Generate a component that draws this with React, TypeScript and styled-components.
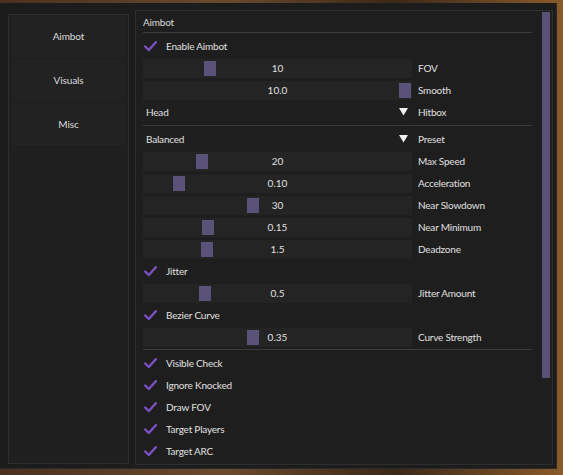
import React from "react";
import styled, { createGlobalStyle } from "styled-components";

const Global = createGlobalStyle`
  html, body { margin: 0; padding: 0; }
  body {
    width: 563px; height: 475px; overflow: hidden;
    background: linear-gradient(90deg, #4a3020 0%, #6b4a2c 40%, #3a2818 70%, #8a5a2a 100%);
    font-family: Lato, "Open Sans", sans-serif;
  }
`;

const Window = styled.div`
  margin-top: 3px;
  width: 557px;
  height: 466px;
  background: #1c1c1c;
  border-right: 1px solid #2a2a2a;
  border-bottom: 1px solid #2a2a2a;
  display: flex;
  align-items: flex-start;
  box-sizing: border-box;
  padding-left: 8px;
  padding-top: 7px;
`;

const Sidebar = styled.div`
  margin-top: 4px;
  width: 121px;
  height: 450px;
  box-sizing: border-box;
  border: 1px solid #2e2e2e;
  background: #1f1f1f;
  display: flex;
  flex-direction: column;
  padding: 0 3px;
`;

const NavButton = styled.div`
  height: 44px;
  display: flex;
  align-items: center;
  justify-content: center;
  color: #dcdcdc;
  font-size: 10px;
  letter-spacing: -0.1px;
  background: #222222;
  border-bottom: 1px solid #1d1d1d;
  box-sizing: border-box;
  padding-bottom: 1px;
`;

const Panel = styled.div`
  margin-left: 6px;
  width: 418px;
  height: 455px;
  box-sizing: border-box;
  border: 1px solid #2e2e2e;
  background: #1e1e1e;
  display: flex;
`;

const Content = styled.div`
  flex: 1;
  padding: 2px 0 0 7px;
  display: flex;
  flex-direction: column;
`;

const Header = styled.div`
  height: 16px;
  display: flex;
  align-items: center;
  color: #dcdcdc;
  font-size: 10px;
  letter-spacing: -0.2px;
  margin-top: 1px;
`;

const Separator = styled.div<{ $top: number }>`
  height: 1px;
  width: 389px;
  background: #3c3c3c;
  margin: ${(p) => p.$top}px 0 2px 0;
`;

const Row = styled.div`
  height: 22px;
  display: flex;
  align-items: center;
  gap: 6px;
`;

const Frame = styled.div`
  position: relative;
  width: 269px;
  height: 19px;
  background: #242424;
  display: flex;
  align-items: center;
  justify-content: center;
  color: #e0e0e0;
  font-size: 10px;
`;

const Grab = styled.div`
  position: absolute;
  top: 2px;
  width: 12px;
  height: 15px;
  background: #5b5279;
`;

const ValueText = styled.span`
  position: relative;
`;

const Label = styled.span`
  color: #e0e0e0;
  font-size: 10px;
  letter-spacing: -0.2px;
`;

const ComboFrame = styled.div`
  width: 269px;
  height: 19px;
  background: #1f1f1f;
  display: flex;
  align-items: center;
  justify-content: space-between;
  padding: 0 4px 0 3px;
  box-sizing: border-box;
  color: #e0e0e0;
  font-size: 10px;
  letter-spacing: -0.2px;
`;

const CheckRow = styled.div`
  height: 22px;
  display: flex;
  align-items: center;
  gap: 9px;
  padding-left: 1px;
`;

const CheckBox = styled.div`
  width: 13px;
  height: 13px;
  display: flex;
  align-items: center;
  justify-content: center;
`;

const ScrollTrack = styled.div`
  width: 13px;
  display: flex;
  justify-content: flex-start;
  padding-top: 1px;
  box-sizing: border-box;
`;

const ScrollThumb = styled.div`
  width: 8px;
  height: 366px;
  background: #5a5078;
  margin-left: 3px;
`;

const Check = () => (
  <CheckBox>
    <svg width="13" height="11" viewBox="0 0 13 11">
      <path d="M1.2 5.5 L4.8 9 L11.8 1.2" fill="none" stroke="#7b52c4" strokeWidth="2.4" strokeLinecap="round" strokeLinejoin="round" />
    </svg>
  </CheckBox>
);

const Arrow = () => (
  <svg width="9" height="8" viewBox="0 0 9 8">
    <path d="M0 0 H9 L4.5 7.5 Z" fill="#f0f0f0" />
  </svg>
);

type Item =
  | { kind: "check"; label: string }
  | { kind: "slider"; label: string; value: string; pos: number }
  | { kind: "combo"; label: string; value: string }
  | { kind: "sep"; top: number };

const items: Item[] = [
  { kind: "check", label: "Enable Aimbot" },
  { kind: "slider", label: "FOV", value: "10", pos: 0.237 },
  { kind: "slider", label: "Smooth", value: "10.0", pos: 0.996 },
  { kind: "combo", label: "Hitbox", value: "Head" },
  { kind: "sep", top: 2 },
  { kind: "combo", label: "Preset", value: "Balanced" },
  { kind: "slider", label: "Max Speed", value: "20", pos: 0.206 },
  { kind: "slider", label: "Acceleration", value: "0.10", pos: 0.117 },
  { kind: "slider", label: "Near Slowdown", value: "30", pos: 0.405 },
  { kind: "slider", label: "Near Minimum", value: "0.15", pos: 0.23 },
  { kind: "slider", label: "Deadzone", value: "1.5", pos: 0.226 },
  { kind: "check", label: "Jitter" },
  { kind: "slider", label: "Jitter Amount", value: "0.5", pos: 0.218 },
  { kind: "check", label: "Bezier Curve" },
  { kind: "slider", label: "Curve Strength", value: "0.35", pos: 0.405 },
  { kind: "sep", top: 1 },
  { kind: "check", label: "Visible Check" },
  { kind: "check", label: "Ignore Knocked" },
  { kind: "check", label: "Draw FOV" },
  { kind: "check", label: "Target Players" },
  { kind: "check", label: "Target ARC" },
];

export default function App() {
  return (
    <>
      <Global />
      <Window>
        <Sidebar>
          <NavButton>Aimbot</NavButton>
          <NavButton>Visuals</NavButton>
          <NavButton>Misc</NavButton>
        </Sidebar>
        <Panel>
          <Content>
            <Header>Aimbot</Header>
            <Separator $top={2} />
            {items.map((it, i) => {
              if (it.kind === "sep") return <Separator key={i} $top={it.top} />;
              if (it.kind === "check")
                return (
                  <CheckRow key={i}>
                    <Check />
                    <Label>{it.label}</Label>
                  </CheckRow>
                );
              if (it.kind === "combo")
                return (
                  <Row key={i}>
                    <ComboFrame>
                      <span>{it.value}</span>
                      <Arrow />
                    </ComboFrame>
                    <Label>{it.label}</Label>
                  </Row>
                );
              return (
                <Row key={i}>
                  <Frame>
                    <Grab style={{ left: Math.round(it.pos * 257) }} />
                    <ValueText>{it.value}</ValueText>
                  </Frame>
                  <Label>{it.label}</Label>
                </Row>
              );
            })}
          </Content>
          <ScrollTrack>
            <ScrollThumb />
          </ScrollTrack>
        </Panel>
      </Window>
    </>
  );
}
